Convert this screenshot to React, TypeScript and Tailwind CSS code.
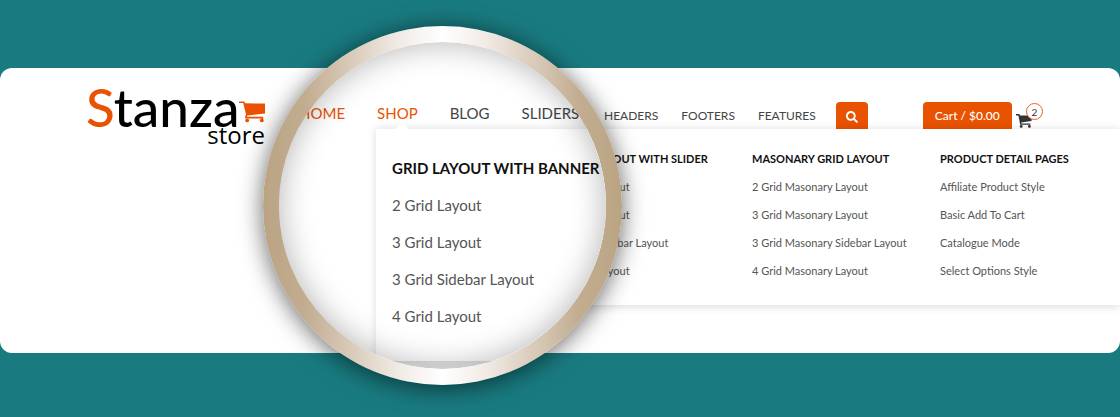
import { FaSearch } from "react-icons/fa";

const mainLinks = ["HEADERS", "FOOTERS", "FEATURES"];

const columns = [
  {
    title: "GRID LAYOUT WITH SLIDER",
    items: ["2 Grid Layout", "3 Grid Layout", "3 Grid Sidebar Layout", "4 Grid Layout"],
  },
  {
    title: "MASONARY GRID LAYOUT",
    items: [
      "2 Grid Masonary Layout",
      "3 Grid Masonary Layout",
      "3 Grid Masonary Sidebar Layout",
      "4 Grid Masonary Layout",
    ],
  },
  {
    title: "PRODUCT DETAIL PAGES",
    items: ["Affiliate Product Style", "Basic Add To Cart", "Catalogue Mode", "Select Options Style"],
  },
];

const lensLinks = [
  { label: "HOME", active: true },
  { label: "SHOP", active: true },
  { label: "BLOG", active: false },
  { label: "SLIDERS", active: false },
];

const lensItems = ["2 Grid Layout", "3 Grid Layout", "3 Grid Sidebar Layout", "4 Grid Layout"];

function LogoCart() {
  return (
    <svg viewBox="0 0 26 22" className="mt-[15px] h-[22px] w-[26px] shrink-0" aria-hidden="true">
      <path
        d="M0 0.5H5.2L6.2 2.2L26 2.6V12.4L8.4 14.4L7.8 15.8H24.2V18.4H22.8V17.4H6.2V15.2L7 13.6L4.2 2H0Z"
        fill="#e95200"
      />
      <circle cx="8.2" cy="19.4" r="1.9" fill="#e95200" />
      <circle cx="22.8" cy="19.4" r="1.9" fill="#e95200" />
    </svg>
  );
}

function Logo() {
  return (
    <a href="#home" className="flex w-[179px] shrink-0 flex-col text-black">
      <span className="flex h-[42px] justify-between">
        <span className="w-[152px] text-[53px] leading-[42px] font-medium">
          <span className="text-[#e95200]">S</span>tanza
        </span>
        <LogoCart />
      </span>
      <span className="self-end font-['Open_Sans',sans-serif] text-2xl leading-[14px]">store</span>
    </a>
  );
}

function Header() {
  return (
    <header className="flex h-[61px] items-start">
      <div className="w-[604px] shrink-0 pt-[18px] pl-[86px]">
        <Logo />
      </div>
      <nav className="flex shrink-0 gap-[23px] pt-10 text-xs leading-4 text-[#444]">
        {mainLinks.map((label) => (
          <a key={label} href="#menu">
            {label}
          </a>
        ))}
      </nav>
      <button
        type="button"
        aria-label="Search"
        className="mt-[34px] ml-5 flex h-[27px] w-8 shrink-0 items-center justify-center rounded-t bg-[#e95200] pt-0.5 text-white"
      >
        <FaSearch size={12} />
      </button>
      <button
        type="button"
        className="mt-[34px] ml-[55px] h-[27px] w-[89px] shrink-0 rounded-t bg-[#e95200] text-xs font-medium text-white"
      >
        Cart / $0.00
      </button>
      <a href="#cart" aria-label="Cart, 2 items" className="relative mt-[46px] ml-1 text-[#333]">
        <svg viewBox="0 0 16 14" className="h-3.5 w-4" fill="currentColor" aria-hidden="true">
          <path d="M0 0H3.4L4 1.5H15.6V7L5.2 8.6L5.4 9.6H14.4V10.8H4.2L3.8 8.8L2.4 1.4H0Z" />
          <circle cx="5.2" cy="12.4" r="1.4" />
          <circle cx="13.4" cy="12.4" r="1.4" />
        </svg>
        <span className="absolute -top-[11px] left-2.5 flex size-[17px] items-center justify-center rounded-full border border-[#e9622a] bg-white text-[10px] leading-none">
          2
        </span>
      </a>
    </header>
  );
}

function MegaMenu() {
  return (
    <section className="relative ml-[376px] grid h-[176px] grid-cols-[188px_188px_188px] bg-white pt-5 pl-[188px] shadow-[0_1px_9px_rgba(0,0,0,0.16)]">
      {columns.map((column) => (
        <div key={column.title} className="whitespace-nowrap">
          <h2 className="text-[11px] leading-5 font-bold text-[#111]">{column.title}</h2>
          <ul className="mt-1 text-[11px] leading-7 text-[#555]">
            {column.items.map((item) => (
              <li key={item}>
                <a href="#layout">{item}</a>
              </li>
            ))}
          </ul>
        </div>
      ))}
    </section>
  );
}

function Lens() {
  return (
    <div className="absolute top-[26px] left-[263px] size-[359px] rounded-full bg-[linear-gradient(90deg,#baa483_0%,#c2ad91_12%,#dccebf_26%,#f1ebe6_38%,#ffffff_50%,#f1ebe6_62%,#dccebf_74%,#c2ad91_88%,#baa483_100%)] p-4 shadow-[0_3px_24px_rgba(0,0,0,0.6)]">
      <div className="relative size-full overflow-hidden rounded-full bg-white">
        <nav className="flex h-[87px] items-end gap-8 pb-1.5 pl-5 text-[15px] leading-5">
          {lensLinks.map((link) => (
            <a key={link.label} href="#menu" className={link.active ? "text-[#e95200]" : "text-[#444]"}>
              {link.label}
            </a>
          ))}
        </nav>
        <section className="relative ml-[97px] h-[232px] bg-white pt-[29px] pl-4 whitespace-nowrap shadow-[0_0_9px_rgba(0,0,0,0.14)]">
          <svg viewBox="0 0 16 7" className="absolute -top-1.5 left-[18px] h-[7px] w-4" aria-hidden="true">
            <path d="M0 7L8 0L16 7Z" fill="#fff" />
          </svg>
          <h2 className="text-[15px] leading-5 font-bold text-[#111]">GRID LAYOUT WITH BANNER</h2>
          <ul className="mt-[9px] text-[15px] leading-[37px] text-[#555]">
            {lensItems.map((item) => (
              <li key={item}>
                <a href="#layout">{item}</a>
              </li>
            ))}
          </ul>
        </section>
        <div className="ml-[97px] h-2 bg-[#f0f0f0]" />
        <div className="pointer-events-none absolute inset-0 rounded-full shadow-[inset_0_0_32px_rgba(0,0,0,0.3)]" />
      </div>
    </div>
  );
}

export default function App() {
  return (
    <main className="relative min-h-screen overflow-hidden bg-[#197b80] pt-[68px] pb-16 font-[Lato,sans-serif]">
      <div className="overflow-hidden rounded-xl bg-white pb-12">
        <Header />
        <MegaMenu />
      </div>
      <Lens />
    </main>
  );
}
